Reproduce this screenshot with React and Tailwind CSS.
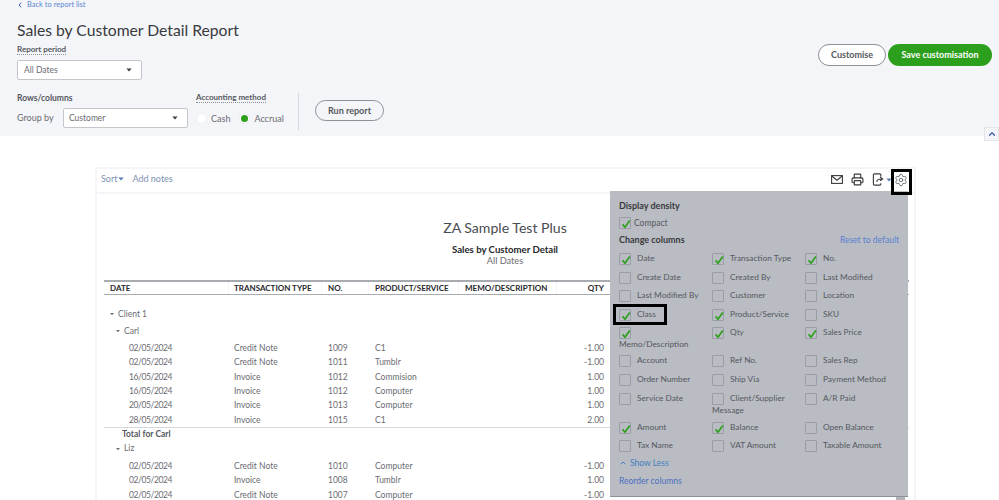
import React from "react";
import { Printer, Settings, ChevronLeft, ChevronUp } from "lucide-react";

function Caret({ className = "" }) {
  return (
    <svg viewBox="0 0 8 5" className={"w-[6px] h-[4px] " + className}>
      <path d="M0.5 0.5 H7.5 L4 4.5 Z" fill="currentColor" />
    </svg>
  );
}

function Check() {
  return (
    <svg viewBox="0 0 12 12" className="absolute left-0 top-0 w-[12px] h-[12px]">
      <path d="M2.6 6.4 L5 9.2 L9.8 2.6" fill="none" stroke="#2ca01c" strokeWidth="1.7" />
    </svg>
  );
}

function Box({ on, label, wrap }) {
  return (
    <div className={(wrap ? "w-[80px]" : "whitespace-nowrap") + " pt-[1px] text-[8.3px] leading-[11px] text-[#55585e]"}>
      <span className="relative inline-block w-[12px] h-[12px] mr-[6px] align-middle border border-[#9a9da4] rounded-[1px]">
        {on && <Check />}
      </span>
      {label}
    </div>
  );
}

const cols = [
  ["Date", 1], ["Transaction Type", 1], ["No.", 1],
  ["Create Date", 0], ["Created By", 0], ["Last Modified", 0],
  ["Last Modified By", 0], ["Customer", 0], ["Location", 0],
  ["Class", 1], ["Product/Service", 1], ["SKU", 0],
  ["Memo/Description", 1, 1], ["Qty", 1], ["Sales Price", 1],
  ["Account", 0], ["Ref No.", 0], ["Sales Rep", 0],
  ["Order Number", 0], ["Ship Via", 0], ["Payment Method", 0],
  ["Service Date", 0], ["Client/Supplier Message", 0, 1], ["A/R Paid", 0],
  ["Amount", 1], ["Balance", 1], ["Open Balance", 0],
  ["Tax Name", 0], ["VAT Amount", 0], ["Taxable Amount", 0],
];

const carl = [
  ["02/05/2024", "Credit Note", "1009", "C1", "-1.00"],
  ["02/05/2024", "Credit Note", "1011", "Tumblr", "-1.00"],
  ["16/05/2024", "Invoice", "1012", "Commision", "1.00"],
  ["16/05/2024", "Invoice", "1012", "Computer", "1.00"],
  ["20/05/2024", "Invoice", "1013", "Computer", "1.00"],
  ["28/05/2024", "Invoice", "1015", "C1", "2.00"],
];
const liz = [
  ["02/05/2024", "Credit Note", "1010", "Computer", "-1.00"],
  ["02/05/2024", "Invoice", "1008", "Tumblr", "1.00"],
  ["02/05/2024", "Credit Note", "1007", "Computer", "-1.00"],
];

function Row({ r }) {
  return (
    <div className="grid grid-cols-[125px_93px_47px_90px_98px_50px] h-[14.3px] items-center text-[8.5px] leading-[14px] text-[#6b6c72]">
      <div className="pl-[25px] tracking-[-0.4px]">{r[0]}</div>
      <div className="pl-[5px]">{r[1]}</div>
      <div className="pl-[6px]">{r[2]}</div>
      <div className="pl-[6px]">{r[3]}</div>
      <div />
      <div className="text-right pr-[3px]">{r[4]}</div>
    </div>
  );
}

export default function App() {
  return (
    <div className="relative w-[999px] h-[500px] overflow-hidden bg-white font-['Lato',sans-serif] text-[#393a3d]">
      <header className="relative h-[136px] bg-[#f4f5f8] px-[17px] flex justify-between">
        <div>
          <div className="flex items-center h-[10px] text-[7.5px] text-[#5a85d0]">
            <ChevronLeft size={8} strokeWidth={3} className="mr-[3px] -ml-[1px] text-[#3b5fb0]" />
            Back to report list
          </div>
          <h1 className="mt-[11px] text-[15.7px] leading-[18px] text-[#393a3d]">Sales by Customer Detail Report</h1>
          <div className="mt-[5px] text-[8px] leading-[10px] font-bold text-[#55585e]">
            <span className="border-b border-dotted border-[#8d9096]">Report period</span>
          </div>
          <div className="mt-[6px] w-[125px] h-[20px] bg-white border border-[#c4c6cb] rounded-[2px] flex items-center justify-between pl-[6px] pr-[9px] text-[8.5px] text-[#6b6c72]">
            All Dates
            <Caret className="text-[#393a3d]" />
          </div>
          <div className="mt-[13px] flex">
            <div className="w-[179px]">
              <div className="text-[8.5px] leading-[12px] font-bold text-[#55585e] -mt-[1px]">Rows/columns</div>
              <div className="mt-[4px] flex items-center">
                <span className="w-[46px] text-[9px] text-[#6b6c72]">Group by</span>
                <div className="w-[125px] h-[20px] bg-white border border-[#c4c6cb] rounded-[2px] flex items-center justify-between pl-[5px] pr-[9px] text-[8.5px] text-[#6b6c72]">
                  Customer
                  <Caret className="text-[#393a3d]" />
                </div>
              </div>
            </div>
            <div className="w-[103px] h-[37px] border-r border-[#d4d7dc]">
              <div className="-mt-[2px] text-[8px] leading-[12px] font-bold text-[#55585e]">
                <span className="border-b border-dotted border-[#8d9096]">Accounting method</span>
              </div>
              <div className="mt-[9px] flex items-center text-[9px] text-[#6b6c72]">
                <span className="w-[11px] h-[11px] rounded-full bg-white border border-[#eceef1] mr-[4px]" />
                <span className="mr-[9px]">Cash</span>
                <span className="w-[11px] h-[11px] rounded-full bg-white border border-[#eceef1] mr-[4px] flex items-center justify-center">
                  <span className="w-[7px] h-[7px] rounded-full bg-[#2ca01c]" />
                </span>
                <span>Accrual</span>
              </div>
            </div>
            <button className="ml-[16px] mt-[7px] w-[69px] h-[21px] rounded-full border border-[#8d9096] text-[9px] font-bold text-[#55585e] bg-transparent">
              Run report
            </button>
          </div>
        </div>
        <div className="flex items-start gap-[2px] pt-[44px] -mr-[10px]">
          <button className="w-[68px] h-[22px] rounded-full border border-[#8d9096] bg-white text-[9px] font-bold text-[#55585e]">Customise</button>
          <button className="w-[104px] h-[22px] rounded-full bg-[#2ca01c] text-[9px] font-bold text-white">Save customisation</button>
        </div>
        <div className="absolute right-0 top-[127px] w-[15px] h-[14px] bg-[#f4f5f8] border border-[#e3e5e8] flex items-center justify-center">
          <ChevronUp size={10} strokeWidth={3} className="text-[#3b5fb0]" />
        </div>
      </header>

      <main className="pt-[31px] pl-[95px]">
        <section className="w-[821px] h-[340px] border-2 border-[#f4f5f8] border-b-0">
          <div className="h-[25px] flex items-center justify-between pl-[4px] pr-[6px] border-b-2 border-[#f4f5f8] text-[9px] text-[#7d92b0]">
            <div className="flex items-center -mt-[3px]">
              Sort
              <Caret className="ml-[1px] mr-[8px] text-[#5a7db0]" />
              Add notes
            </div>
            <div className="flex items-center text-[#393a3d] -mt-[2px]">
              <svg viewBox="0 0 12 9" className="w-[12px] h-[9px] mr-[8px]">
                <rect x="0.6" y="0.6" width="10.8" height="7.8" fill="none" stroke="#393a3d" strokeWidth="1.1" />
                <path d="M0.8 1 L6 5.2 L11.2 1" fill="none" stroke="#393a3d" strokeWidth="1.1" />
              </svg>
              <Printer size={13} strokeWidth={2.1} className="mr-[8px]" />
              <svg viewBox="0 0 14 14" className="w-[13px] h-[13px]">
                <path d="M9.5 4 V2 a1 1 0 0 0-1-1 H2.5 a1 1 0 0 0-1 1 V12 a1 1 0 0 0 1 1 H8.5 a1 1 0 0 0 1-1 V11" fill="none" stroke="#393a3d" strokeWidth="1.2" />
                <path d="M5 9.5 C5.5 7.5 7.5 6.5 10 6.5 M8.8 4.5 L11.5 6.5 L8.8 8.5" fill="none" stroke="#393a3d" strokeWidth="1.2" />
              </svg>
              <Caret className="ml-[1px] mr-[2px] text-[#5a7db0]" />
              <Settings size={14} strokeWidth={1.4} className="text-[#55585e]" />
            </div>
          </div>
          <div className="w-[816px] flex flex-col items-center">
            <div className="mt-[25px] text-[14.1px] leading-[18px] text-[#4a4c52]">ZA Sample Test Plus</div>
            <div className="mt-[7px] text-[9.6px] leading-[11px] font-bold text-[#26282c]">Sales by Customer Detail</div>
            <div className="text-[9.2px] leading-[12px] text-[#6b6c72]">All Dates</div>
          </div>
          <div className="ml-[7px] mt-[13px] w-[805px]">
            <div className="grid grid-cols-[125px_93px_47px_90px_98px_50px] h-[15px] items-center border-t-2 border-b border-[#a8abb0] text-[8px] font-bold text-[#26282c]">
              <div className="pl-[6px] h-full flex items-center border-r border-[#f4f5f8]">DATE</div>
              <div className="pl-[5px] h-full flex items-center border-r border-[#f4f5f8]">TRANSACTION TYPE</div>
              <div className="pl-[6px] h-full flex items-center border-r border-[#f4f5f8]">NO.</div>
              <div className="pl-[6px] h-full flex items-center border-r border-[#f4f5f8]">PRODUCT/SERVICE</div>
              <div className="pl-[6px] h-full flex items-center border-r border-[#f4f5f8]">MEMO/DESCRIPTION</div>
              <div className="pr-[3px] text-right">QTY</div>
            </div>
            <div className="mt-[12px] h-[14px] flex items-center pl-[5px] text-[8.5px] text-[#6b6c72]">
              <Caret className="mr-[3px] scale-75" />
              Client 1
            </div>
            <div className="mt-[3px] h-[14px] flex items-center pl-[11px] text-[8.5px] text-[#6b6c72]">
              <Caret className="mr-[3px] scale-75" />
              Carl
            </div>
            <div className="mt-[3px] border-b border-[#d4d7dc]">
              {carl.map((r, i) => <Row key={i} r={r} />)}
            </div>
            <div className="h-[14px] flex items-center pl-[18px] text-[8.5px] font-bold text-[#55585e]">Total for Carl</div>
            <div className="h-[14px] flex items-center pl-[11px] text-[8.5px] text-[#6b6c72]">
              <Caret className="mr-[3px] scale-75" />
              Liz
            </div>
            <div className="mt-[3px]">
              {liz.map((r, i) => <Row key={i} r={r} />)}
            </div>
          </div>
        </section>
      </main>

      {/* settings popover over the report */}
      <div className="absolute left-[610px] top-[191px] w-[298px] h-[306px] bg-[#b9bcc3] border-b border-[#8d9096] pl-[9px] pr-[9px] pt-[9px]">
        <div className="text-[9px] leading-[12px] font-bold text-[#393a3d]">Display density</div>
        <div className="mt-[5px] text-[8.5px] leading-[12px] text-[#55585e] flex items-center">
          <span className="relative inline-block w-[12px] h-[12px] mr-[3px] border border-[#9a9da4] rounded-[1px]"><Check /></span>
          Compact
        </div>
        <div className="mt-[5px] flex justify-between items-center text-[9px] leading-[12px]">
          <span className="font-bold text-[#393a3d]">Change columns</span>
          <span className="text-[#5a7fd0] text-[8.5px]">Reset to default</span>
        </div>
        <div className="mt-[6px] grid grid-cols-[93px_93px_93px] grid-rows-[repeat(4,18.6px)_28px_repeat(2,18.6px)_29px_repeat(2,18.6px)]">
          {cols.map(([label, on, wrap]) => <Box key={label} on={!!on} label={label} wrap={!!wrap} />)}
        </div>
        <div className="-mt-[1px] flex items-center text-[8.5px] leading-[12px] text-[#3f7fc0]">
          <ChevronUp size={8} strokeWidth={3} className="mr-[3px]" />
          Show Less
        </div>
        <div className="mt-[6px] text-[8.5px] leading-[12px] text-[#4a6fc0]">Reorder columns</div>
      </div>
      <div className="absolute left-[896px] top-[497px] w-[9px] h-[3px] bg-[#b0b3b8]" />

      {/* highlight rectangles drawn on top of the screenshot */}
      <div className="absolute left-[891px] top-[169px] w-[21px] h-[26px] border-[3px] border-black" />
      <div className="absolute left-[613px] top-[304px] w-[54px] h-[21px] border-[3px] border-black" />
    </div>
  );
}
